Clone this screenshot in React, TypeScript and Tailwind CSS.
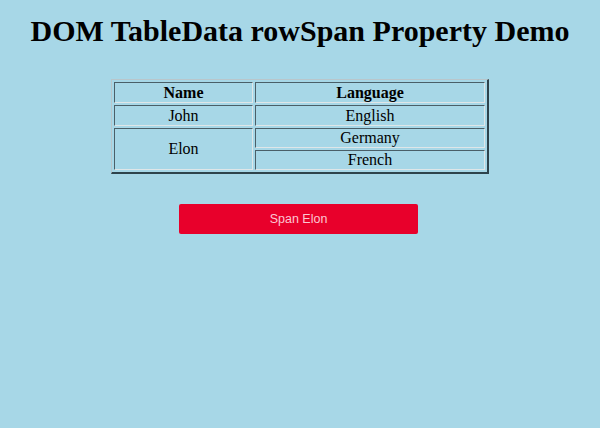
import React from "react";

export default function App() {
  const base =
    "border border-t-[#4a5f68] border-l-[#4a5f68] border-b-[#dfe6e8] border-r-[#dfe6e8] p-0 text-center";
  const tall = `${base} h-[21px] leading-[19px]`;
  const cell = `${base} h-[20px] leading-[18px]`;
  return (
    <div className="min-h-[428px] w-full bg-[#a7d7e7] font-['Liberation_Serif',serif] text-black pt-[14px]">
      <h1 className="text-center text-[30px] font-bold leading-[34px] tracking-[0px]">
        DOM TableData rowSpan Property Demo
      </h1>
      <table className="mx-auto mt-[31px] border-separate border-spacing-[2px] border border-t-[#b9c6cb] border-l-[#b9c6cb] border-b-[#2e434c] border-r-[#2e434c] border-b-2 border-r-2 text-[16px]">
        <tbody>
          <tr>
            <th className={`${tall} w-[139px] font-bold`}>Name</th>
            <th className={`${tall} w-[230px] font-bold`}>Language</th>
          </tr>
          <tr>
            <td className={tall}>John</td>
            <td className={tall}>English</td>
          </tr>
          <tr>
            <td className={cell} rowSpan={2}>
              Elon
            </td>
            <td className={cell}>Germany</td>
          </tr>
          <tr>
            <td className={cell}>French</td>
          </tr>
        </tbody>
      </table>
      <div className="mt-[30px] flex justify-center">
        <button className="w-[239px] h-[30px] rounded-[2px] bg-[#e8002b] text-[#fcc6d2] font-['Liberation_Sans',Arial,sans-serif] text-[12.5px] ml-[-3px]">
          Span Elon
        </button>
      </div>
    </div>
  );
}
